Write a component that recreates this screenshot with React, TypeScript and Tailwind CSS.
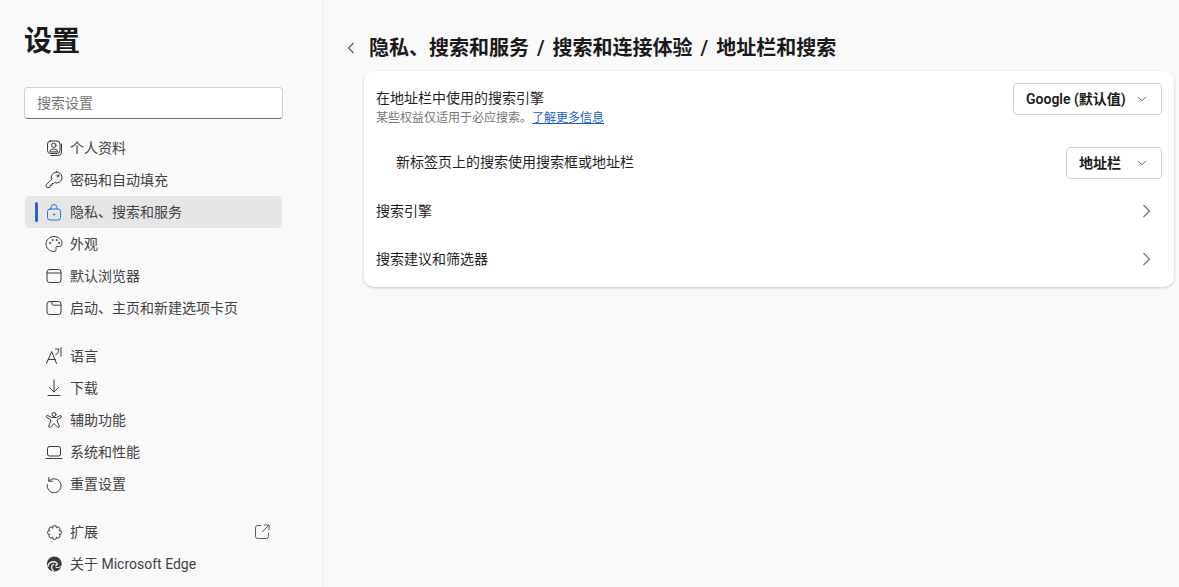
import React from "react";

const S = { fill: "none", stroke: "currentColor", strokeWidth: 1, strokeLinecap: "round" as const, strokeLinejoin: "round" as const };

function Ic({ children, className = "" }: { children: React.ReactNode; className?: string }) {
  return (
    <svg width="18" height="18" viewBox="0 0 18 18" className={`shrink-0 ${className}`} {...S}>
      {children}
    </svg>
  );
}

const icons: Record<string, React.ReactNode> = {
  profile: (
    <Ic>
      <rect x="2.500" y="2" width="12.500" height="12.500" rx="3" />
      <path d="M16.500 5v8a3.500 3.500 0 0 1-3.500 3.500H6" />
      <circle cx="8.800" cy="6.300" r="2.200" />
      <path d="M5 12.500c0-1.500.8-2.300 2-2.300h3.500c1.200 0 2 .8 2 2.300z" />
    </Ic>
  ),
  key: (
    <Ic>
      <path d="M11.500 1A5.500 5.500 0 1 1 9.500 11.600L8.500 12.500H7V14.200H5.300V15.800L4.500 16.500H2.200A1 1 0 0 1 1.300 15.500V13.500L6.500 8.300A5.500 5.500 0 0 1 11.500 1Z" />
      <circle cx="13" cy="4.800" r="1" />
    </Ic>
  ),
  lock: (
    <Ic>
      <rect x="2.500" y="6" width="13" height="11" rx="2.500" />
      <path d="M6 6V4.500a3 3 0 0 1 6 0V6" />
      <circle cx="9" cy="11.500" r=".7" fill="currentColor" />
    </Ic>
  ),
  palette: (
    <Ic>
      <path d="M9 1.500C13.500 1.500 17 4.500 17 8.300C17 11 15 12 13 11.500C11.500 11.200 10.500 12 11 13.500C11.500 15.500 10.500 16.500 9 16.500C4.500 16.500 1 13 1 9C1 4.800 4.500 1.500 9 1.500Z" />
      <circle cx="5" cy="8" r=".5" />
      <circle cx="7.500" cy="5" r=".5" />
      <circle cx="11.500" cy="5" r=".5" />
      <circle cx="14" cy="8" r=".5" />
    </Ic>
  ),
  browser: (
    <Ic>
      <rect x="2" y="2.500" width="14" height="13" rx="2.500" />
      <path d="M2 6h14" />
    </Ic>
  ),
  start: (
    <Ic>
      <rect x="2" y="2.500" width="14" height="13" rx="2.500" />
      <path d="M7 2.500V5a1.200 1.200 0 0 0 1.200 1.200H16" />
    </Ic>
  ),
  lang: (
    <Ic>
      <path d="M1.500 16.500L6.700 4.500 11.500 16.500M3.300 12.500h7" />
      <path d="M10.500 2h3.300c0 2.600-1 4.500-3 5.700M16 .8v8.500" />
    </Ic>
  ),
  download: (
    <Ic>
      <path d="M9 1V13M4.500 8.500L9 13l4.500-4.500M3 16.500h12" />
    </Ic>
  ),
  access: (
    <Ic>
      <circle cx="9" cy="3.500" r="2" />
      <path d="M2.500 4.300L6.500 6.500H11.500L15.500 4.300L16.500 6L12 9L12.500 11L14.500 15.500L12.800 16.500L9 12.500L5.200 16.500L3.500 15.500L5.500 11L6 9L1.500 6Z" />
    </Ic>
  ),
  laptop: (
    <Ic>
      <rect x="2.500" y="3.500" width="13" height="9.500" rx="2" />
      <path d="M1 15.500h16" />
    </Ic>
  ),
  reset: (
    <Ic>
      <path d="M3.800 2.500v3.700H7.500" />
      <path d="M3.900 6A7 7 0 1 1 2.200 9.500" />
    </Ic>
  ),
  ext: (
    <Ic>
      <path d="M7.600 4.900A1.950 1.950 0 1 1 11.400 4.900A1.950 1.950 0 1 1 14.100 7.600A1.950 1.950 0 1 1 14.100 11.400A1.950 1.950 0 1 1 11.400 14.100A1.950 1.950 0 1 1 7.600 14.100A1.950 1.950 0 1 1 4.900 11.400A1.950 1.950 0 1 1 4.900 7.600A1.950 1.950 0 1 1 7.600 4.900Z" />
    </Ic>
  ),
};

function EdgeLogo() {
  return (
    <svg width="18" height="18" viewBox="0 0 18 18" className="shrink-0" fill="none" strokeLinecap="round">
      <circle cx="9.300" cy="9" r="7.500" fill="#3a3a3a" />
      <path d="M2.800 11.500C3.300 7.500 8 5.500 11.200 7.500C12.800 8.700 12.300 10.300 10.800 10.300" stroke="#fafafa" strokeWidth="1.400" />
      <path d="M8.300 15.600C5.800 13.800 6 10 8.600 9.300" stroke="#fafafa" strokeWidth="1.300" />
      <path d="M10.800 12.200C12.500 13.300 14.800 12.800 16.300 11" stroke="#fafafa" strokeWidth="1" />
    </svg>
  );
}

function NavItem({ icon, label, active, trailing }: { icon: React.ReactNode; label: string; active?: boolean; trailing?: React.ReactNode }) {
  return (
    <div className={`relative flex h-8 w-[257px] items-center rounded pl-5 pr-2.5 text-[14px] text-[#424242] ${active ? "bg-[#e6e6e6]" : ""}`}>
      {active && <span className="absolute left-[10px] top-[6px] h-5 w-[3px] rounded-full bg-[#2563d8]" />}
      <span className={`flex w-[25px] ${active ? "text-[#2f6fdc]" : "text-[#3a3a3a]"}`}>{icon}</span>
      <span className="flex-1 pb-px leading-none">{label}</span>
      {trailing}
    </div>
  );
}

function Dropdown({ label, w }: { label: string; w: string }) {
  return (
    <div className={`flex h-8 items-center justify-between rounded border border-[#d1d1d1] bg-white pl-3 pr-[14px] text-[14px] font-semibold text-[#1a1a1a] ${w}`}>
      <span>{label}</span>
      <svg width="10" height="6" viewBox="0 0 10 6" fill="none" stroke="#6b6b6b" strokeWidth="1">
        <path d="M1 .8l4 4 4-4" />
      </svg>
    </div>
  );
}

function Chevron() {
  return (
    <svg width="9" height="14" viewBox="0 0 9 14" fill="none" stroke="#6a6a6a" strokeWidth="1.100" className="mr-[23px]">
      <path d="M1.500 1l6 6-6 6" />
    </svg>
  );
}

export default function App() {
  const font = "font-['Roboto','Noto_Sans_CJK_SC',sans-serif]";
  return (
    <div className={`flex h-[587px] w-[1179px] overflow-hidden bg-[#f9f9f9] ${font}`}>
      <aside className="h-full w-[324px] shrink-0 border-r border-[#ededed] pl-6 pr-10">
        <h1 className="mt-[23px] h-[37px] text-[28px] font-bold leading-[38px] text-[#1a1a1a]">设置</h1>
        <div className="mt-[27px] flex h-8 w-[259px] items-center rounded border border-[#cfcfcf] border-b-[#6e6e6e] bg-white pl-3 text-[14px] text-[#757575]">
          搜索设置
        </div>
        <nav className="mt-[13px] flex flex-col pl-px">
          <NavItem icon={icons.profile} label="个人资料" />
          <NavItem icon={icons.key} label="密码和自动填充" />
          <NavItem icon={icons.lock} label="隐私、搜索和服务" active />
          <NavItem icon={icons.palette} label="外观" />
          <NavItem icon={icons.browser} label="默认浏览器" />
          <NavItem icon={icons.start} label="启动、主页和新建选项卡页" />
          <div className="h-4" />
          <NavItem icon={icons.lang} label="语言" />
          <NavItem icon={icons.download} label="下载" />
          <NavItem icon={icons.access} label="辅助功能" />
          <NavItem icon={icons.laptop} label="系统和性能" />
          <NavItem icon={icons.reset} label="重置设置" />
          <div className="h-4" />
          <NavItem
            icon={icons.ext}
            label="扩展"
            trailing={
              <svg width="16" height="16" viewBox="0 0 16 16" fill="none" stroke="#5a5a5a" strokeWidth="1" className="mr-0.5">
                <path d="M7 1.500H3.500a2 2 0 0 0-2 2v9a2 2 0 0 0 2 2h9a2 2 0 0 0 2-2V9M10 1h5v5M15 1L8 8" />
              </svg>
            }
          />
          <NavItem icon={<EdgeLogo />} label="关于 Microsoft Edge" />
        </nav>
      </aside>
      <main className="flex-1 pl-10 pr-[5px]">
        <div className="mt-[33px] flex h-[30px] items-center">
          <svg width="8" height="12" viewBox="0 0 8 12" fill="none" stroke="#5a5a5a" strokeWidth="1.100" className="ml-[-17px] mr-[14px]">
            <path d="M6.500 1l-5 5 5 5" />
          </svg>
          <h2 className="flex gap-2 whitespace-pre text-[20px] font-semibold leading-[30px] text-[#1a1a1a]">
            <span>隐私、搜索和服务</span>
            <span>/</span>
            <span>搜索和连接体验</span>
            <span>/</span>
            <span>地址栏和搜索</span>
          </h2>
        </div>
        <section className="mt-2 w-[810px] rounded-[10px] bg-white pb-1 shadow-[0_1px_3px_rgba(0,0,0,0.2)]">
          <div className="flex h-[60px] items-start justify-between px-3 pt-3">
            <div className="pt-[5px]">
              <div className="text-[14px] leading-[20px] text-[#1f1f1f]">在地址栏中使用的搜索引擎</div>
              <div className="mt-0.5 text-[12px] leading-[16px] text-[#767676]">
                某些权益仅适用于必应搜索。<span className="text-[#1a5fc9] underline">了解更多信息</span>
              </div>
            </div>
            <Dropdown label="Google (默认值)" w="w-[149px]" />
          </div>
          <div className="flex h-14 items-start justify-between pl-8 pr-3 pt-4">
            <span className="pt-[5px] text-[14px] leading-[20px] text-[#1f1f1f]">新标签页上的搜索使用搜索框或地址栏</span>
            <Dropdown label="地址栏" w="w-[96px]" />
          </div>
          <div className="flex h-12 items-center justify-between pl-3">
            <span className="text-[14px] text-[#1f1f1f]">搜索引擎</span>
            <Chevron />
          </div>
          <div className="flex h-12 items-center justify-between pl-3">
            <span className="text-[14px] text-[#1f1f1f]">搜索建议和筛选器</span>
            <Chevron />
          </div>
        </section>
      </main>
    </div>
  );
}
